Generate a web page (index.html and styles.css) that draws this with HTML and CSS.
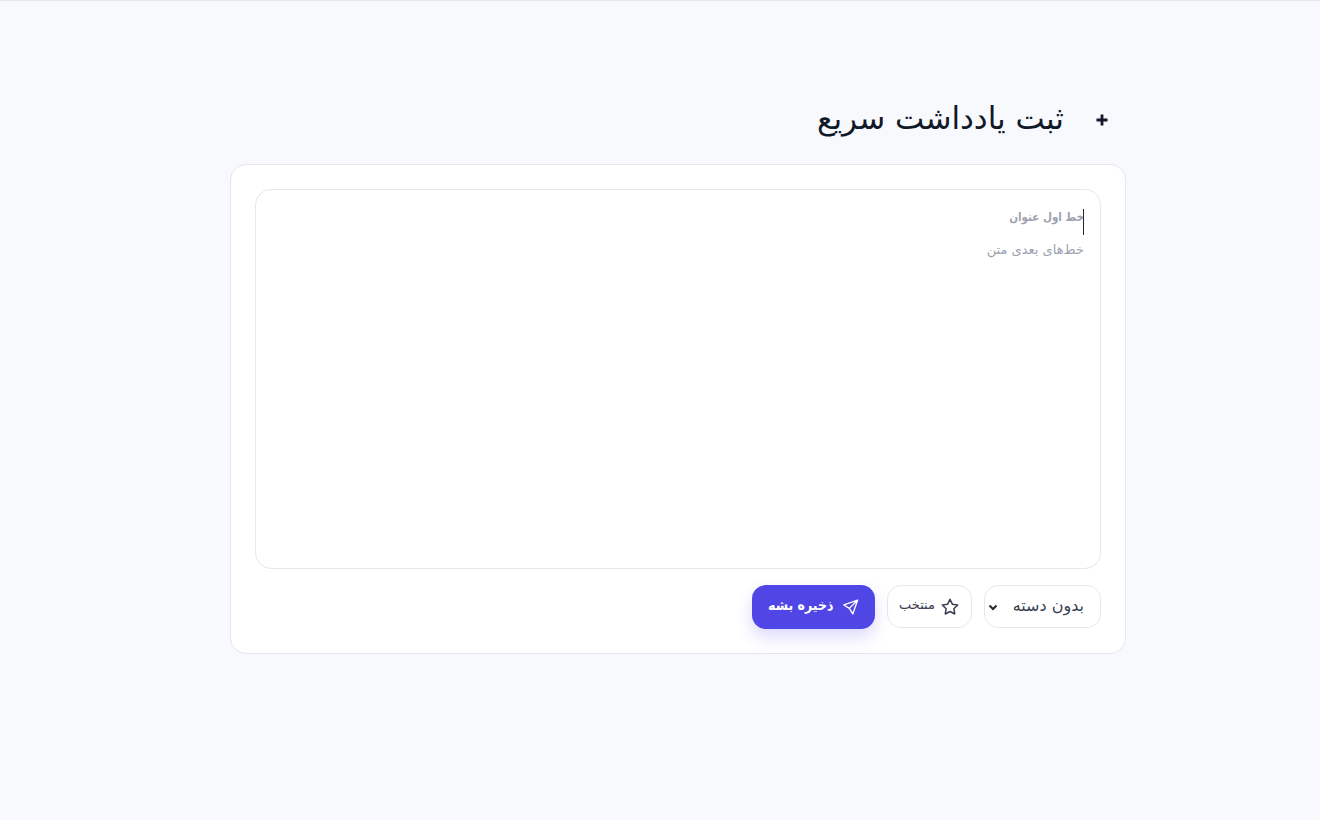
FILE: index.html
```html
<!DOCTYPE html>
<html lang="fa" dir="rtl">
<head>
<meta charset="utf-8">
<title>ثبت یادداشت سریع</title>
<link rel="stylesheet" href="styles.css">
</head>
<body>
<main class="page">
  <section class="wrap">
    <header class="head">
      <svg class="plus" viewBox="0 0 14 14" width="14" height="14" aria-hidden="true"><path d="M7 1.5v11M1.5 7h11" fill="none" stroke="#111827" stroke-width="2.8"/></svg>
      <h1 class="title">ثبت یادداشت سریع</h1>
    </header>
    <div class="card">
      <div class="editor">
        <div class="line-first"><span class="caret"></span>خط اول عنوان</div>
        <div class="line-rest">خط‌های بعدی متن</div>
      </div>
      <div class="actions">
        <div class="select">
          <span class="select-label">بدون دسته</span>
          <svg viewBox="0 0 12 12" width="12" height="12" aria-hidden="true"><path d="M2.5 4.5 6 8l3.5-3.5" fill="none" stroke="#1f2937" stroke-width="2"/></svg>
        </div>
        <button class="fav" type="button">
          <svg viewBox="0 0 24 24" width="20" height="20" aria-hidden="true"><path d="M12 2.8l2.85 5.8 6.4.93-4.63 4.5 1.1 6.37L12 17.4l-5.72 3 1.1-6.37-4.63-4.5 6.4-.93z" fill="none" stroke="#374151" stroke-width="1.8" stroke-linejoin="round"/></svg>
          <span class="btn-label">منتخب</span>
        </button>
        <button class="save" type="button">
          <svg viewBox="0 0 24 24" width="18" height="18" aria-hidden="true"><path d="M21.5 2.5 2.5 9.2l7.6 4.7 4.7 7.6zM21.5 2.5 10.1 13.9" fill="none" stroke="#fff" stroke-width="1.8" stroke-linejoin="round" stroke-linecap="round"/></svg>
          <span class="btn-label">ذخیره بشه</span>
        </button>
      </div>
    </div>
  </section>
</main>
</body>
</html>
```
FILE: styles.css
```css
* { box-sizing: border-box; }
html, body { margin: 0; height: 100%; }
body {
  background: #f7f9fc;
  border-top: 1px solid #e5e7eb;
  font-family: "DejaVu Sans", "Noto Sans", sans-serif;
  color: #111827;
}
.page {
  padding: 99px 0 0 36px;
}
.wrap {
  width: 896px;
  margin: 0 auto;
}
.head {
  display: flex;
  align-items: center;
  gap: 31px;
  height: 36px;
  padding-right: 17px;
  margin-bottom: 28px;
}
.plus { margin-top: 4px; }
.title {
  margin: 0;
  font-size: 31px;
  font-weight: 400;
  line-height: 36px;
  color: #111827;
}
.card {
  background: #fff;
  border: 1px solid #e5e7eb;
  border-radius: 16px;
  padding: 24px;
  height: 490px;
}
.editor {
  height: 380px;
  border: 1px solid #e5e7eb;
  border-radius: 16px;
  padding: 19px 16px;
  background: #fff;
}
.line-first {
  position: relative;
  font-family: "DejaVu Sans Condensed", "DejaVu Sans", sans-serif;
  font-size: 11.5px;
  font-weight: 700;
  line-height: 16px;
  color: #9ca3af;
}
.caret {
  position: absolute;
  top: 0;
  right: 0;
  width: 1px;
  height: 26px;
  background: #1f2937;
}
.line-rest {
  margin-top: 17px;
  font-size: 13px;
  line-height: 16px;
  color: #9ca3af;
}
.actions {
  display: flex;
  align-items: flex-start;
  gap: 12px;
  margin-top: 16px;
}
.select, .fav {
  display: flex;
  align-items: center;
  height: 43px;
  background: #fff;
  border: 1px solid #e5e7eb;
  border-radius: 14px;
  font-family: inherit;
  color: #374151;
}
.select {
  width: 117px;
  padding: 0 16px 0 1px;
  justify-content: space-between;
  font-size: 16px;
}
.select svg { margin-left: 1px; }
.select-label { position: relative; top: -1px; }
.btn-label { position: relative; top: -2px; white-space: nowrap; }
.fav {
  width: 85px;
  padding: 0 11px;
  gap: 5px;
  font-size: 13px;
}
.save {
  display: flex;
  align-items: center;
  gap: 8px;
  height: 44px;
  padding: 0 16px;
  width: 123px;
  border: 0;
  border-radius: 14px;
  background: #4f46e5;
  color: #fff;
  font-family: "DejaVu Sans Condensed", "DejaVu Sans", sans-serif;
  font-size: 14px;
  font-weight: 700;
  box-shadow: 0 8px 16px rgba(79, 70, 229, 0.2);
}
```
